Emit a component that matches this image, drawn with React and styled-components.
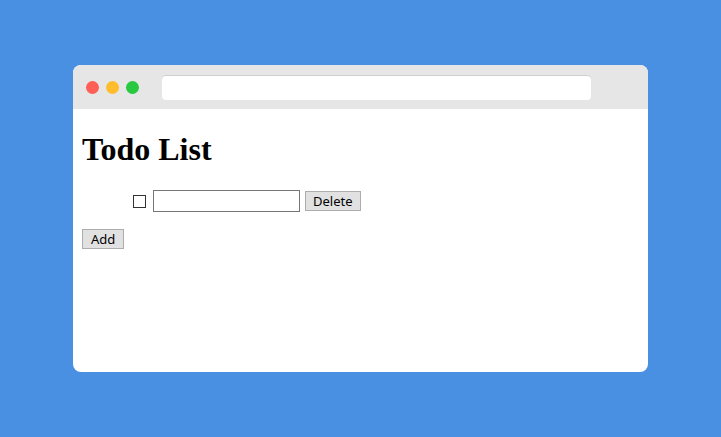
import React, {useState} from 'react';
import styled, {createGlobalStyle} from 'styled-components';

const GlobalStyle = createGlobalStyle`
  html, body {
    margin: 0;
    padding: 0;
    background: #4a90e2;
  }
`;

const Page = styled.div`
  width: 721px;
  height: 437px;
  display: flex;
  align-items: flex-start;
  justify-content: center;
  padding-top: 65px;
  box-sizing: border-box;
  background: #4a90e2;
`;

const Window = styled.div`
  width: 575px;
  height: 307px;
  background: #fff;
  border-radius: 8px;
  overflow: hidden;
  display: flex;
  flex-direction: column;
`;

const TitleBar = styled.div`
  height: 44px;
  background: #e6e6e6;
  display: flex;
  align-items: center;
  padding: 0 57px 0 13px;
  flex-shrink: 0;
`;

const Dots = styled.div`
  display: flex;
  gap: 7px;
`;

const Dot = styled.span`
  width: 13px;
  height: 13px;
  border-radius: 50%;
  background: ${p => p.color};
`;

const AddressBar = styled.div`
  flex: 1;
  margin-left: 23px;
  height: 25px;
  background: #fff;
  border-radius: 4px;
  box-shadow: inset 0 1px 0 #cfcfcf;
`;

const Content = styled.div`
  flex: 1;
  padding: 0 9px;
  font-family: "Liberation Serif", serif;
`;

const Heading = styled.h1`
  margin: 22px 0 0;
  font-size: 32px;
  line-height: 37px;
  font-weight: bold;
  color: #000;
`;

const List = styled.ul`
  list-style: none;
  margin: 22px 0 0;
  padding-left: 51px;
`;

const Item = styled.li`
  display: flex;
  align-items: center;
  height: 22px;
`;

const Check = styled.input`
  appearance: none;
  width: 13px;
  height: 13px;
  margin: 0 7px 0 0;
  border: 1px solid #333;
  background: #fff;
  box-sizing: border-box;
`;

const TextInput = styled.input`
  width: 147px;
  height: 22px;
  box-sizing: border-box;
  border: 1px solid #767676;
  margin: 0 5px 0 0;
  padding: 1px 2px;
  font-family: "Noto Sans", sans-serif;
  font-size: 13px;
`;

const Button = styled.button`
  height: 20px;
  box-sizing: border-box;
  padding: 0 ${p => (p.wide ? 7 : 8)}px;
  border: 1px solid #adadad;
  background: #e1e1e1;
  font-family: "Noto Sans", sans-serif;
  font-size: 13px;
  line-height: 17px;
  color: #000;
  border-radius: 0;
`;

const AddRow = styled.div`
  margin-top: 17px;
  display: flex;
`;

export default function App() {
  const [todos, setTodos] = useState([{id: 1, text: '', done: false}]);

  return (
    <Page>
      <GlobalStyle/>
      <Window>
        <TitleBar>
          <Dots>
            <Dot color="#ff5f57"/>
            <Dot color="#ffbd2e"/>
            <Dot color="#28c840"/>
          </Dots>
          <AddressBar/>
        </TitleBar>
        <Content>
          <Heading>Todo List</Heading>
          <List>
            {todos.map(t => (
              <Item key={t.id}>
                <Check type="checkbox" checked={t.done} onChange={() => setTodos(todos.map(x => x.id === t.id ? {...x, done: !x.done} : x))}/>
                <TextInput value={t.text} onChange={e => setTodos(todos.map(x => x.id === t.id ? {...x, text: e.target.value} : x))}/>
                <Button wide onClick={() => setTodos(todos.filter(x => x.id !== t.id))}>Delete</Button>
              </Item>
            ))}
          </List>
          <AddRow>
            <Button onClick={() => setTodos([...todos, {id: Date.now(), text: '', done: false}])}>Add</Button>
          </AddRow>
        </Content>
      </Window>
    </Page>
  );
}
